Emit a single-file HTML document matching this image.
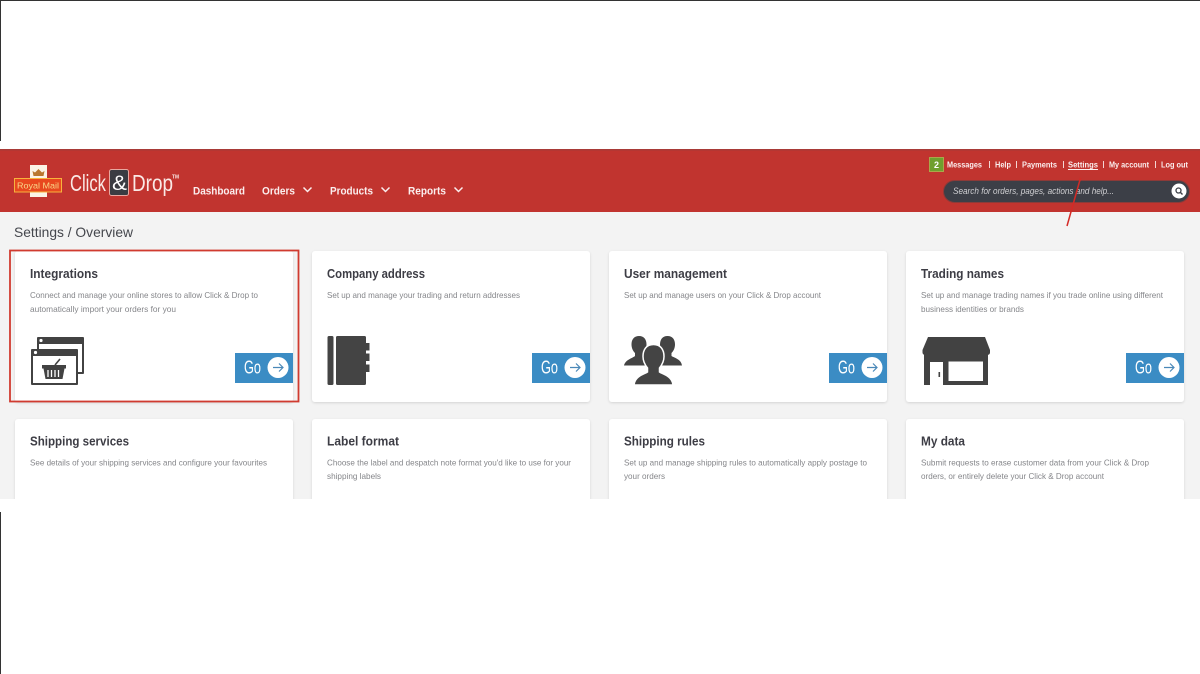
<!DOCTYPE html>
<html lang="en"><head><meta charset="utf-8"><title>Click &amp; Drop - Settings</title>
<style>
html,body{margin:0;padding:0;background:#fff;width:1200px;height:674px;overflow:hidden}
svg{display:block;filter:blur(.3px)}
text{font-family:"Liberation Sans",sans-serif}
.t{font-size:12.5px;font-weight:700;fill:#3d3d45}
.d{font-size:8.5px;fill:#85868a}
.n{font-size:11px;font-weight:700;fill:#fbeeee}
.l{font-size:8px;font-weight:700;fill:#fbeeee}
.g{font-size:18px;fill:#fff}
</style></head><body>
<svg width="1200" height="674" viewBox="0 0 1200 674" xmlns="http://www.w3.org/2000/svg">
<defs>
<filter id="s" x="-5%" y="-5%" width="110%" height="115%"><feDropShadow dx="0" dy="1" stdDeviation="1.2" flood-color="#000" flood-opacity=".13"/></filter>
<clipPath id="c"><rect x="0" y="212" width="1200" height="287"/></clipPath>
<g id="go"><rect x="0" y="0" width="58" height="30" fill="#3b8cc4"/><circle cx="43" cy="14.500" r="10.500" fill="#fff"/><path d="M38 14.500H48M44 10.500l4 4-4 4" fill="none" stroke="#4a88b8" stroke-width="1.200"/></g>
</defs>
<rect width="1200" height="1" fill="#333"/>
<rect x="0" width="1" height="141" fill="#333"/>
<rect x="0" y="512" width="1" height="162" fill="#333"/>

<!-- content bg -->
<rect y="212" width="1200" height="287" fill="#f3f3f3"/>
<!-- header -->
<rect y="150" width="1200" height="62" fill="#c1342f"/>
<rect y="149" width="1200" height="1.500" fill="#a83a37"/>

<!-- logo -->
<path d="M30 165h17v13h15v14H47v5H30v-5H14v-14h16z" fill="#fbf3e6"/>
<rect x="14.500" y="178.500" width="47" height="13.500" fill="#e8481f" stroke="#f7b33d" stroke-width="1"/>
<path d="M33.500 176l-1-5 2.500 1.500L38.500 169l3.500 3.500 2.500-1.500-1 5z" fill="#b9772f"/>
<text x="17" y="188.500" class="l" textLength="42" lengthAdjust="spacingAndGlyphs" style="font-size:8.500px;font-weight:400;fill:#f9d98a">Royal Mail</text>
<text x="70" y="191" textLength="36" lengthAdjust="spacingAndGlyphs" style="font-size:23px;fill:#fae9e6">Click</text>
<rect x="109.500" y="169.500" width="19" height="26" rx="2" fill="#3a3c42" stroke="#e8a8a0" stroke-width="1"/>
<text x="112" y="190" textLength="15" lengthAdjust="spacingAndGlyphs" style="font-size:21px;fill:#fff">&amp;</text>
<text x="132" y="191" textLength="41" lengthAdjust="spacingAndGlyphs" style="font-size:23px;fill:#fae9e6">Drop</text>
<text x="172" y="178.500" textLength="7" lengthAdjust="spacingAndGlyphs" style="font-size:5px;font-weight:700;fill:#fae9e6">TM</text>

<!-- nav -->
<text x="193" y="194.500" class="n" textLength="52" lengthAdjust="spacingAndGlyphs">Dashboard</text>
<text x="262" y="194.500" class="n" textLength="33" lengthAdjust="spacingAndGlyphs">Orders</text>
<path d="M303.500 187.500l4 4 4-4" fill="none" stroke="#fbeeee" stroke-width="1.500"/>
<text x="330" y="194.500" class="n" textLength="43" lengthAdjust="spacingAndGlyphs">Products</text>
<path d="M381.500 187.500l4 4 4-4" fill="none" stroke="#fbeeee" stroke-width="1.500"/>
<text x="408" y="194.500" class="n" textLength="38" lengthAdjust="spacingAndGlyphs">Reports</text>
<path d="M454.500 187.500l4 4 4-4" fill="none" stroke="#fbeeee" stroke-width="1.500"/>

<!-- top links -->
<rect x="929.500" y="157.500" width="14" height="14" fill="#6f9f2e" stroke="#a9a84a"/>
<text x="934" y="168" class="l" style="font-size:9px;fill:#fff">2</text>
<text x="947" y="167.500" class="l" textLength="35" lengthAdjust="spacingAndGlyphs">Messages</text>
<text x="995" y="167.500" class="l" textLength="16" lengthAdjust="spacingAndGlyphs">Help</text>
<text x="1022" y="167.500" class="l" textLength="35" lengthAdjust="spacingAndGlyphs">Payments</text>
<text x="1068" y="167.500" class="l" textLength="30" lengthAdjust="spacingAndGlyphs">Settings</text>
<rect x="1068" y="169" width="30" height="1" fill="#fbeeee"/>
<text x="1109" y="167.500" class="l" textLength="40" lengthAdjust="spacingAndGlyphs">My account</text>
<text x="1161" y="167.500" class="l" textLength="27" lengthAdjust="spacingAndGlyphs">Log out</text>
<g fill="#f3d5d3"><rect x="989" y="161" width="1" height="7"/><rect x="1016" y="161" width="1" height="7"/><rect x="1063" y="161" width="1" height="7"/><rect x="1103" y="161" width="1" height="7"/><rect x="1155" y="161" width="1" height="7"/></g>

<!-- search -->
<rect x="943.500" y="180.500" width="246" height="22" rx="11" fill="#3c3f47" stroke="#8c3a38" stroke-width="1"/>
<text x="953" y="194" textLength="161" lengthAdjust="spacingAndGlyphs" style="font-size:9px;font-style:italic;fill:#cfcfd2">Search for orders, pages, actions and help...</text>
<circle cx="1179" cy="191" r="7.500" fill="#fff"/>
<circle cx="1178.500" cy="190.500" r="2.500" fill="none" stroke="#3c3f47" stroke-width="1.300"/>
<path d="M1180.500 192.500l2 2" stroke="#3c3f47" stroke-width="1.400"/>

<!-- breadcrumb -->
<text x="14" y="237" textLength="119" lengthAdjust="spacingAndGlyphs" style="font-size:14px;fill:#45474d">Settings / Overview</text>

<g clip-path="url(#c)">
<g fill="#fff" filter="url(#s)">
<rect x="15" y="251" width="278" height="151" rx="3"/>
<rect x="312" y="251" width="278" height="151" rx="3"/>
<rect x="609" y="251" width="278" height="151" rx="3"/>
<rect x="906" y="251" width="278" height="151" rx="3"/>
<rect x="15" y="419" width="278" height="120" rx="3"/>
<rect x="312" y="419" width="278" height="120" rx="3"/>
<rect x="609" y="419" width="278" height="120" rx="3"/>
<rect x="906" y="419" width="278" height="120" rx="3"/>
</g>

<text x="30" y="278" class="t" textLength="68" lengthAdjust="spacingAndGlyphs">Integrations</text>
<text x="30" y="298" class="d" textLength="228" lengthAdjust="spacingAndGlyphs">Connect and manage your online stores to allow Click &amp; Drop to</text>
<text x="30" y="312" class="d" textLength="146" lengthAdjust="spacingAndGlyphs">automatically import your orders for you</text>

<text x="327" y="278" class="t" textLength="98" lengthAdjust="spacingAndGlyphs">Company address</text>
<text x="327" y="298" class="d" textLength="193" lengthAdjust="spacingAndGlyphs">Set up and manage your trading and return addresses</text>

<text x="624" y="278" class="t" textLength="103" lengthAdjust="spacingAndGlyphs">User management</text>
<text x="624" y="298" class="d" textLength="197" lengthAdjust="spacingAndGlyphs">Set up and manage users on your Click &amp; Drop account</text>

<text x="921" y="278" class="t" textLength="83" lengthAdjust="spacingAndGlyphs">Trading names</text>
<text x="921" y="298" class="d" textLength="242" lengthAdjust="spacingAndGlyphs">Set up and manage trading names if you trade online using different</text>
<text x="921" y="312" class="d" textLength="103" lengthAdjust="spacingAndGlyphs">business identities or brands</text>

<text x="30" y="445.500" class="t" textLength="99" lengthAdjust="spacingAndGlyphs">Shipping services</text>
<text x="30" y="465.500" class="d" textLength="237" lengthAdjust="spacingAndGlyphs">See details of your shipping services and configure your favourites</text>

<text x="327" y="445.500" class="t" textLength="72" lengthAdjust="spacingAndGlyphs">Label format</text>
<text x="327" y="465.500" class="d" textLength="244" lengthAdjust="spacingAndGlyphs">Choose the label and despatch note format you'd like to use for your</text>
<text x="327" y="479" class="d" textLength="54" lengthAdjust="spacingAndGlyphs">shipping labels</text>

<text x="624" y="445.500" class="t" textLength="81" lengthAdjust="spacingAndGlyphs">Shipping rules</text>
<text x="624" y="465.500" class="d" textLength="243" lengthAdjust="spacingAndGlyphs">Set up and manage shipping rules to automatically apply postage to</text>
<text x="624" y="479" class="d" textLength="41" lengthAdjust="spacingAndGlyphs">your orders</text>

<text x="921" y="445.500" class="t" textLength="44" lengthAdjust="spacingAndGlyphs">My data</text>
<text x="921" y="465.500" class="d" textLength="228" lengthAdjust="spacingAndGlyphs">Submit requests to erase customer data from your Click &amp; Drop</text>
<text x="921" y="479" class="d" textLength="183" lengthAdjust="spacingAndGlyphs">orders, or entirely delete your Click &amp; Drop account</text>

<!-- Go buttons -->
<use href="#go" x="235" y="353"/><text x="244" y="373.500" class="g" textLength="17" lengthAdjust="spacingAndGlyphs">Go</text>
<use href="#go" x="532" y="353"/><text x="541" y="373.500" class="g" textLength="17" lengthAdjust="spacingAndGlyphs">Go</text>
<use href="#go" x="829" y="353"/><text x="838" y="373.500" class="g" textLength="17" lengthAdjust="spacingAndGlyphs">Go</text>
<use href="#go" x="1126" y="353"/><text x="1135" y="373.500" class="g" textLength="17" lengthAdjust="spacingAndGlyphs">Go</text>

<!-- integrations icon -->
<rect x="37" y="337" width="47" height="37" rx="1" fill="#424242"/>
<rect x="39" y="344" width="43" height="28" fill="#fff"/>
<rect x="31" y="349" width="47" height="36" rx="1" fill="#424242"/>
<circle cx="41" cy="340.500" r="1.600" fill="#fff"/>
<circle cx="35.500" cy="352.500" r="1.600" fill="#fff"/>
<rect x="33" y="356" width="43" height="27" fill="#fff"/>
<path d="M42 365h24v3.500h-1.500L62.500 379h-17L43.500 368.500H42z" fill="#424242"/>
<path d="M55 365l5-6" stroke="#424242" stroke-width="1.600" fill="none"/>
<path d="M48 370v7M51.500 370v7M55 370v7M58.500 370v7" stroke="#fff" stroke-width="1.300"/>

<!-- notebook -->
<g fill="#444">
<rect x="327.500" y="336" width="6" height="49" rx="1.500"/>
<rect x="336" y="336" width="30" height="49" rx="1.500"/>
<rect x="366" y="343" width="3.500" height="7.500"/>
<rect x="366" y="353.500" width="3.500" height="7.500"/>
<rect x="366" y="364.500" width="3.500" height="7.500"/>
</g>

<!-- people -->
<g fill="#444">
<path d="M639 336c5 0 7.500 3.500 7.500 8.500 0 3.500-2 6.500-3.500 8.500v3c3 2 9 3 10 9.500h-29c1.500-6 8-7 11-9.500v-3c-2-2-3.500-5-3.500-8.500 0-5 2.500-8.500 7.500-8.500z"/>
<path d="M667.500 336c5 0 7.500 3.500 7.500 8.500 0 3.500-1.500 6.500-3.500 8.500v3c3 2 9.500 3 10.500 9.500h-29c1-6 8-7 10.500-9.500v-3c-1.500-2-3.500-5-3.500-8.500 0-5 2.500-8.500 7.500-8.500z"/>
<path d="M653.500 344.500c7 0 10.500 5 10.500 12 0 5-2.500 9-4.500 11.500v4c4 2.500 12.500 4 13.500 13h-39c1-9 9.500-10.500 13.500-13v-4c-2-2.500-4.500-6.500-4.500-11.500 0-7 3.500-12 10.500-12z" stroke="#fff" stroke-width="1.500"/>
</g>

<!-- shop -->
<g fill="#424242">
<path d="M928 337h57l5 13v2.500a2.500 2.500 0 0 1-2.500 2.500H925a2.500 2.500 0 0 1-2.500-2.500V350z"/>
<path d="M924 354h64v31h-45v-23h-13v23h-6z"/>
</g>
<rect x="948.500" y="361.500" width="34.500" height="19.500" fill="#fff"/>
<rect x="938.500" y="372" width="1.600" height="5" fill="#424242"/>

<!-- highlight box -->
<rect x="10" y="250.500" width="288.500" height="151" fill="none" stroke="#d03b30" stroke-width="1.800"/>
</g>

<!-- arrow -->
<path d="M1080.500 178L1067 226" stroke="#d42a26" stroke-width="1.500" fill="none"/>

<rect y="499" width="1200" height="13" fill="#fff"/>
</svg>
</body></html>
